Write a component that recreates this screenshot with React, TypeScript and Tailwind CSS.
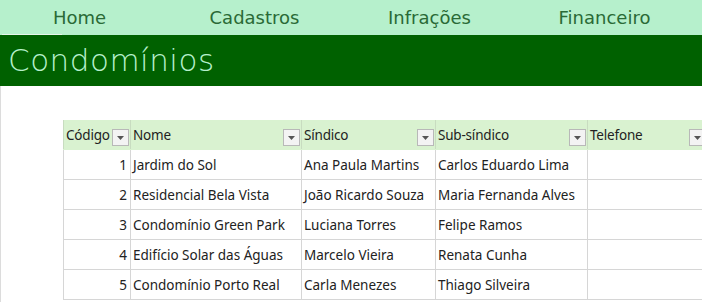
import React from "react";

const cols = [
  { label: "Código", w: 67 },
  { label: "Nome", w: 171 },
  { label: "Síndico", w: 134 },
  { label: "Sub-síndico", w: 152 },
  { label: "Telefone", w: 120 },
];

const rows = [
  ["1", "Jardim do Sol", "Ana Paula Martins", "Carlos Eduardo Lima", ""],
  ["2", "Residencial Bela Vista", "João Ricardo Souza", "Maria Fernanda Alves", ""],
  ["3", "Condomínio Green Park", "Luciana Torres", "Felipe Ramos", ""],
  ["4", "Edifício Solar das Águas", "Marcelo Vieira", "Renata Cunha", ""],
  ["5", "Condomínio Porto Real", "Carla Menezes", "Thiago Silveira", ""],
];

function Dropdown() {
  return (
    <div className="absolute right-[1px] top-[9px] w-[17px] h-[17px] bg-[#f3f3f3] border border-[#b8b8b8] flex items-center justify-center">
      <svg width="7" height="4" viewBox="0 0 7 4">
        <path d="M0 0 L7 0 L3.5 4 Z" fill="#555" />
      </svg>
    </div>
  );
}

export default function App() {
  return (
    <div className="w-[702px] h-[302px] overflow-hidden bg-white relative" style={{ fontFamily: "'Noto Sans', sans-serif" }}>
      <div className="h-[35px] bg-[#b6f0cc] flex items-center text-[#2a6a36] text-[18px] relative" style={{ fontFamily: "'DejaVu Sans', sans-serif", fontWeight: 400 }}>
        <div className="w-[175px] ml-[-8px] text-center">Home</div>
        <div className="w-[175px] text-center">Cadastros</div>
        <div className="w-[175px] text-center">Infrações</div>
        <div className="w-[175px] text-center">Financeiro</div>
        <div className="absolute left-[2px] bottom-0 w-[60px] h-[1px] bg-[#e8f5ec]" />
      </div>
      <div className="h-[51px] bg-[#006100] flex items-center pl-[8px]">
        <span className="text-[#b6f0cc] text-[31px] leading-none tracking-[0.5px]" style={{ fontFamily: "'DejaVu Sans', sans-serif", fontWeight: 300 }}>Condomínios</span>
      </div>
      <div className="flex">
        <div className="w-[2px] h-[216px] border-r border-[#dcdcdc]" />
        <div className="pl-[62px] pt-[34px]">
          <div className="flex h-[30px] bg-[#d9f2d0] border-b border-[#d9f2d0]">
            {cols.map((c, i) => (
              <div key={i} className="relative h-full border-l border-[#c8dcc0] pl-[2px] text-[13.5px] tracking-[-0.2px] text-[#222] leading-[31px]" style={{ width: c.w }}>
                {c.label}
                <Dropdown />
              </div>
            ))}
          </div>
          {rows.map((r, ri) => (
            <div key={ri} className="flex h-[30px] border-b border-[#d6d6d6]">
              {r.map((v, ci) => (
                <div
                  key={ci}
                  className={`h-full border-l border-[#d6d6d6] text-[13.5px] text-[#222] leading-[30px] ${ci === 0 ? "text-right pr-[3px]" : "pl-[2px]"}`}
                  style={{ width: cols[ci].w }}
                >
                  {v}
                </div>
              ))}
            </div>
          ))}
        </div>
      </div>
    </div>
  );
}
